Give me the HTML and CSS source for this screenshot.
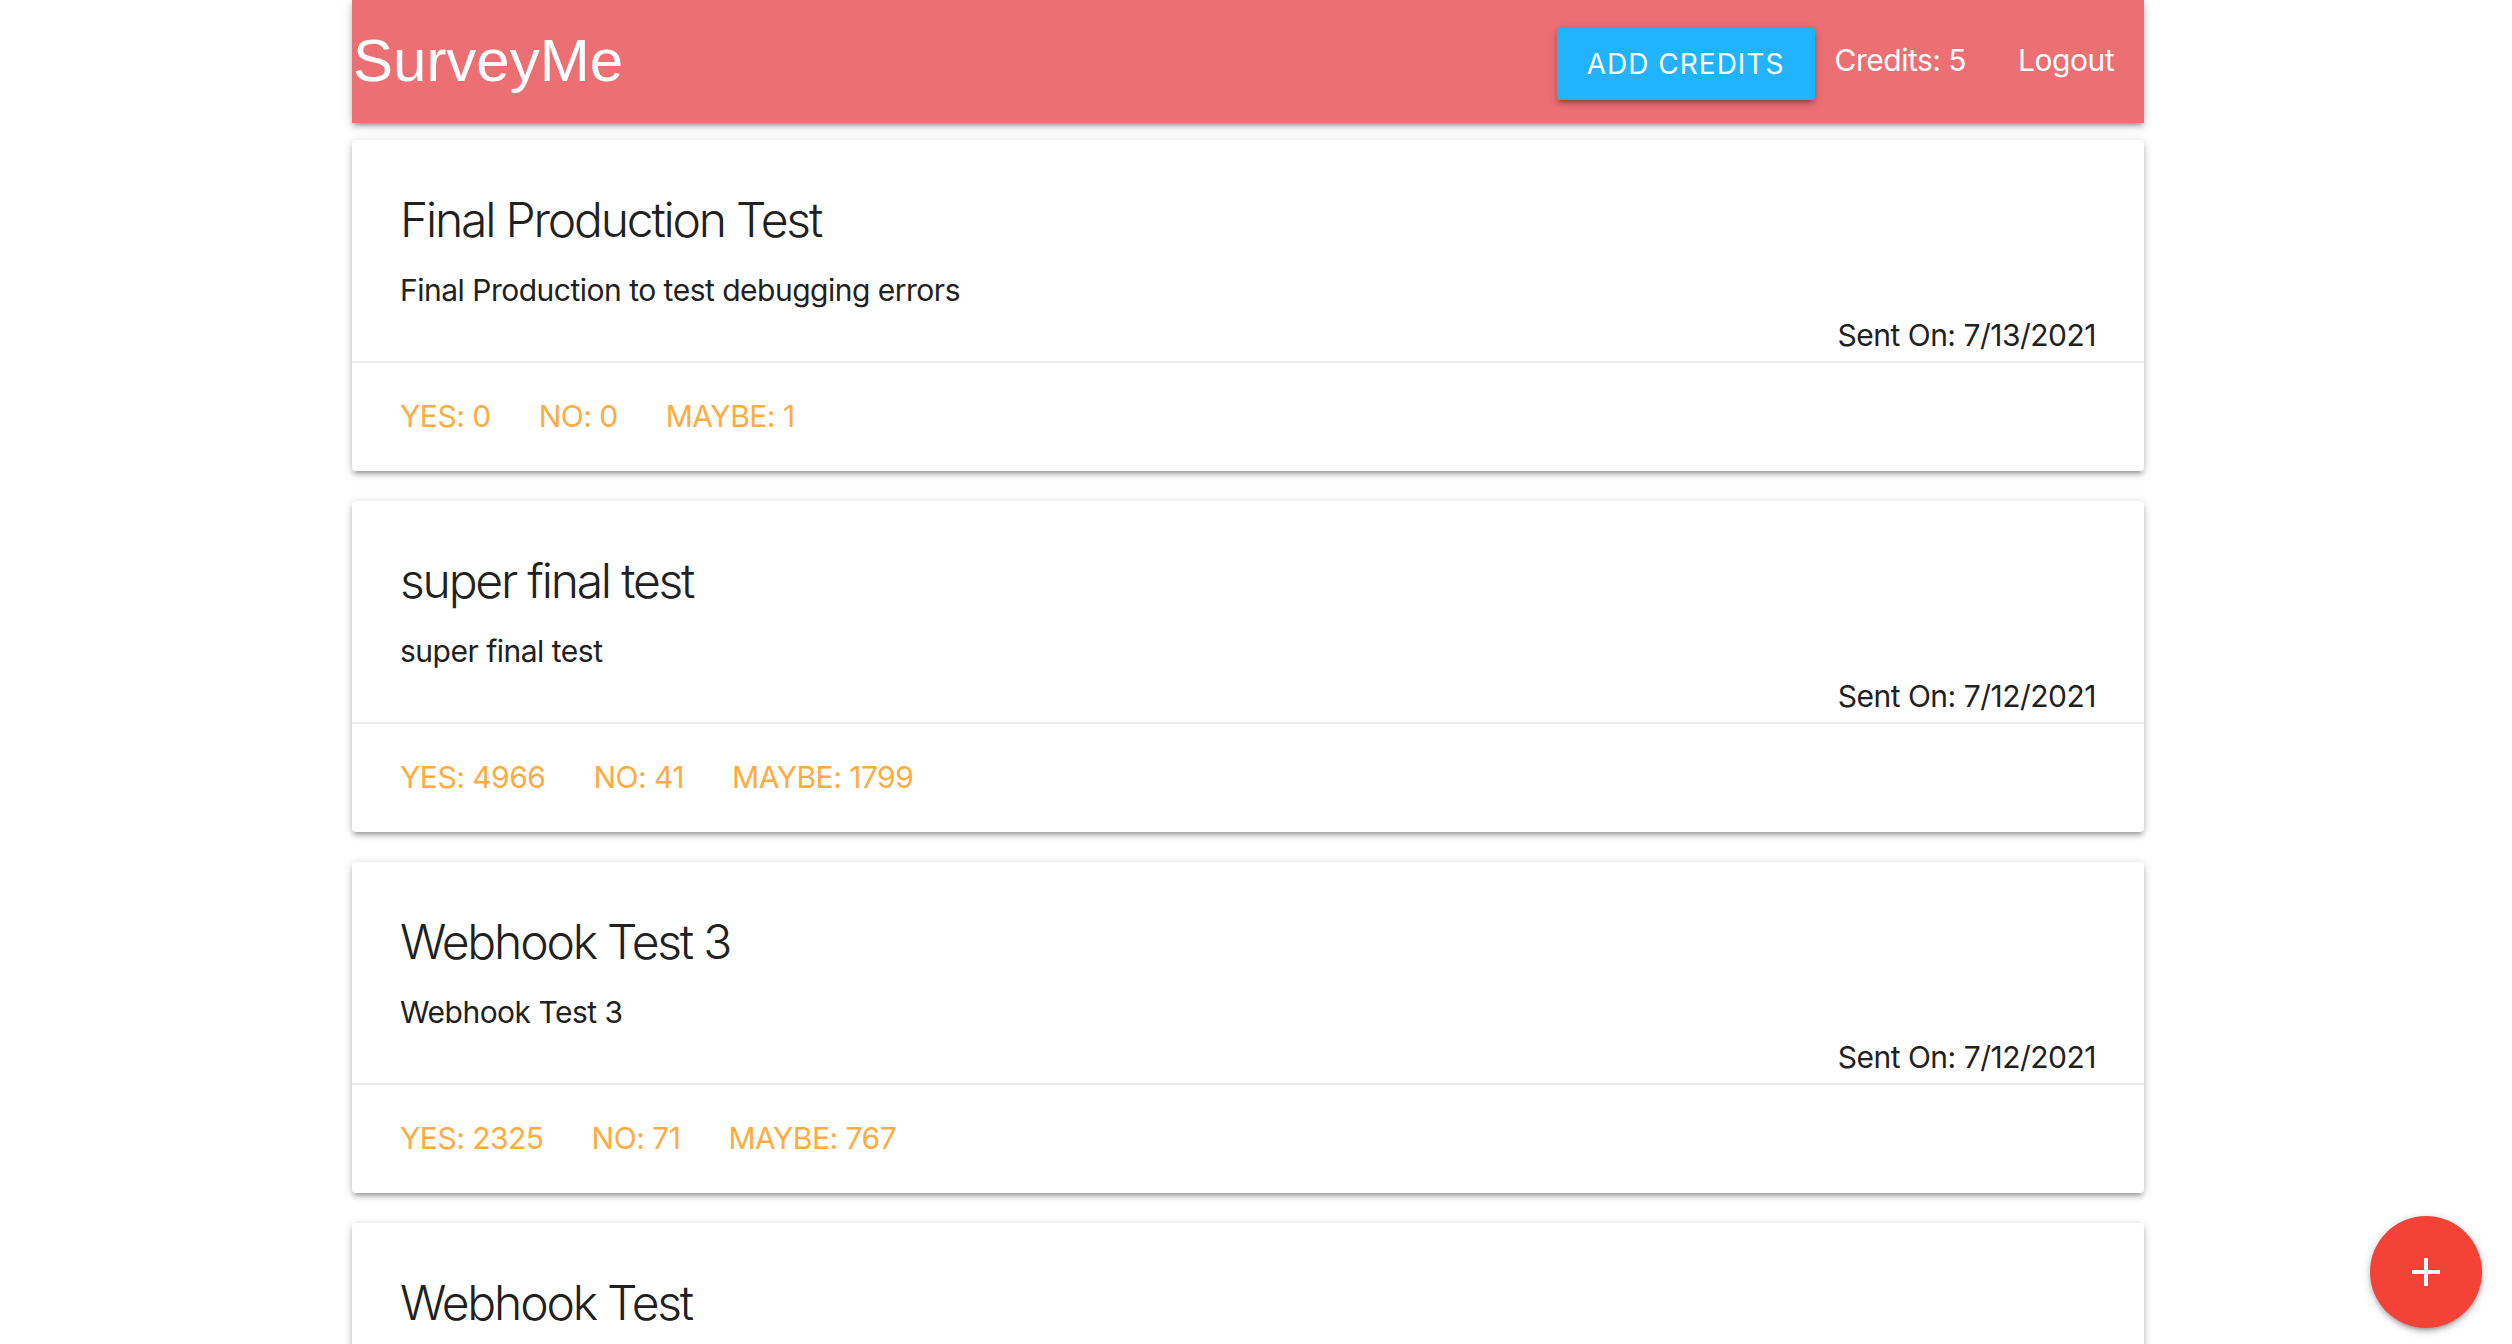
FILE: index.html
```html
<!DOCTYPE html>
<html lang="en">
<head>
<meta charset="utf-8">
<title>SurveyMe</title>
<link rel="stylesheet" href="styles.css">
</head>
<body>
<div class="container">
  <nav class="nav">
    <a class="brand-logo" href="#">SurveyMe</a>
    <ul class="nav-links">
      <li><a class="btn" href="#">Add Credits</a></li>
      <li class="credits">Credits: 5</li>
      <li><a class="nav-link" href="#">Logout</a></li>
    </ul>
  </nav>

  <main class="survey-list">
    <div class="card">
      <div class="card-content">
        <span class="card-title">Final Production Test</span>
        <p class="card-body">Final Production to test debugging errors</p>
        <p class="sent-on">Sent On: 7/13/2021</p>
      </div>
      <div class="card-action">
        <a href="#">Yes: 0</a>
        <a href="#">No: 0</a>
        <a href="#">Maybe: 1</a>
      </div>
    </div>

    <div class="card">
      <div class="card-content">
        <span class="card-title">super final test</span>
        <p class="card-body">super final test</p>
        <p class="sent-on">Sent On: 7/12/2021</p>
      </div>
      <div class="card-action">
        <a href="#">Yes: 4966</a>
        <a href="#">No: 41</a>
        <a href="#">Maybe: 1799</a>
      </div>
    </div>

    <div class="card">
      <div class="card-content">
        <span class="card-title">Webhook Test 3</span>
        <p class="card-body">Webhook Test 3</p>
        <p class="sent-on">Sent On: 7/12/2021</p>
      </div>
      <div class="card-action">
        <a href="#">Yes: 2325</a>
        <a href="#">No: 71</a>
        <a href="#">Maybe: 767</a>
      </div>
    </div>

    <div class="card card-partial">
      <div class="card-content">
        <span class="card-title">Webhook Test</span>
      </div>
    </div>
  </main>
</div>

<a class="fab" href="#" aria-label="New survey">
  <svg width="28" height="28" viewBox="0 0 28 28"><path d="M12 0h4v12h12v4H16v12h-4V16H0v-4h12z" fill="#fff"/></svg>
</a>
</body>
</html>
```

FILE: styles.css
```css
html, body {
  margin: 0;
  padding: 0;
  background: #ffffff;
  overflow: hidden;
}

body {
  font-family: Inter, "Noto Sans", "Liberation Sans", sans-serif;
  color: rgba(0, 0, 0, 0.87);
  height: 1344px;
}

a {
  text-decoration: none;
  color: inherit;
}

.container {
  width: 1792px;
  margin-left: 352px;
}

.nav {
  height: 123px;
  background: #ec6f74;
  display: flex;
  align-items: center;
  justify-content: space-between;
  box-shadow: 0 4px 4px 0 rgba(0,0,0,0.14), 0 6px 2px -4px rgba(0,0,0,0.12), 0 2px 10px 0 rgba(0,0,0,0.2);
  position: relative;
  z-index: 2;
}

.brand-logo {
  font-family: "Liberation Sans", Arial, sans-serif;
  font-size: 60px;
  color: #fff;
  padding-left: 1px;
  margin-top: -3px;
}

.nav-links {
  list-style: none;
  display: flex;
  align-items: center;
  margin: 0;
  padding: 0;
  color: #fff;
  font-size: 30px;
  letter-spacing: -0.5px;
}

.btn {
  display: block;
  background: #21b3fd;
  color: #fff;
  text-transform: uppercase;
  font-size: 28px;
  letter-spacing: 1px;
  height: 72px;
  line-height: 72px;
  width: 258px;
  text-align: center;
  border-radius: 4px;
  box-shadow: 0 4px 4px 0 rgba(0,0,0,0.14), 0 6px 2px -4px rgba(0,0,0,0.12), 0 2px 10px 0 rgba(0,0,0,0.2);
  margin-top: 5px;
}

.credits {
  margin-left: 20px;
  margin-top: -4px;
}

.nav-link {
  display: block;
  padding: 0 30px 0 52px;
  margin-top: -4px;
}

.survey-list {
  display: flex;
  flex-direction: column;
  gap: 30px;
  padding-top: 17px;
}

.card {
  background: #fff;
  border-radius: 4px;
  box-shadow: 0 4px 4px 0 rgba(0,0,0,0.14), 0 6px 2px -4px rgba(0,0,0,0.12), 0 2px 10px 0 rgba(0,0,0,0.2);
  flex-shrink: 0;
}

.card-partial {
  min-height: 330px;
}

.card-content {
  padding: 48px 48px 3px;
}

.card-title {
  display: block;
  font-size: 48px;
  font-weight: 300;
  letter-spacing: -2.2px;
  line-height: 64px;
  margin-bottom: 16px;
  color: #212121;
}

.card-body,
.sent-on {
  margin: 0;
  font-size: 30px;
  line-height: 45px;
  letter-spacing: -0.5px;
  color: #212121;
}

.sent-on {
  text-align: right;
}

.card-action {
  border-top: 2px solid rgba(160, 160, 160, 0.2);
  padding: 31px 48px 32px;
  display: flex;
  gap: 48px;
  font-size: 30px;
  line-height: 45px;
  letter-spacing: -0.5px;
  text-transform: uppercase;
}

.card-action a {
  color: #ffab40;
}

.fab {
  position: fixed;
  right: 30px;
  bottom: 16px;
  width: 112px;
  height: 112px;
  border-radius: 50%;
  background: #f44336;
  display: flex;
  align-items: center;
  justify-content: center;
  box-shadow: 0 4px 4px 0 rgba(0,0,0,0.14), 0 6px 2px -4px rgba(0,0,0,0.12), 0 2px 10px 0 rgba(0,0,0,0.2);
  z-index: 5;
}
```
